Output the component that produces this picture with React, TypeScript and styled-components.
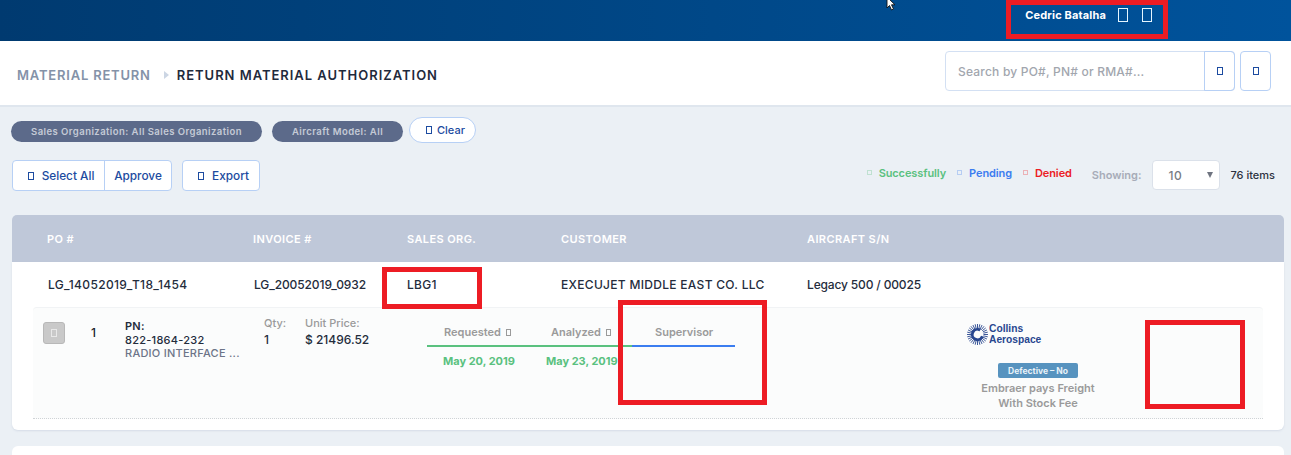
import React from 'react';
import styled, { createGlobalStyle } from 'styled-components';

const GlobalStyle = createGlobalStyle`
  html, body {
    margin: 0;
    padding: 0;
    background: #ebf0f5;
    font-family: Inter, "Liberation Sans", sans-serif;
    overflow: hidden;
  }
  * {
    box-sizing: border-box;
  }
`;

const columns = [
  { label: 'PO #', width: 206 },
  { label: 'INVOICE #', width: 154 },
  { label: 'SALES ORG.', width: 154 },
  { label: 'CUSTOMER', width: 246 },
  { label: 'AIRCRAFT S/N', width: 200 },
];

const rowValues = [
  { value: 'LG_14052019_T18_1454', width: 206, spacing: 0.35 },
  { value: 'LG_20052019_0932', width: 153, spacing: -0.1 },
  { value: 'LBG1', width: 154, spacing: 0.3 },
  { value: 'EXECUJET MIDDLE EAST CO. LLC', width: 246, spacing: 0.3 },
  { value: 'Legacy 500 / 00025', width: 200, spacing: -0.15 },
];

const sunRays = Array.from({ length: 28 }, (_, i) => (i / 28) * Math.PI * 2);

const App: React.FC = () => {
  return (
    <Page>
      <GlobalStyle />
      <TopBar>
        <UserName>Cedric Batalha</UserName>
        <TopIcon />
        <TopIcon />
      </TopBar>
      <SubHeader>
        <Crumbs>
          <CrumbParent>MATERIAL RETURN</CrumbParent>
          <CrumbArrow />
          <CrumbCurrent>RETURN MATERIAL AUTHORIZATION</CrumbCurrent>
        </Crumbs>
        <SearchGroup>
          <SearchBox>
            <SearchPlaceholder>Search by PO#, PN# or RMA#...</SearchPlaceholder>
            <SearchButton>
              <BlueIcon />
            </SearchButton>
          </SearchBox>
          <SquareButton>
            <BlueIcon />
          </SquareButton>
        </SearchGroup>
      </SubHeader>
      <Filters>
        <FilterPill $width={251}>Sales Organization: All Sales Organization</FilterPill>
        <FilterPill $width={131}>Aircraft Model: All</FilterPill>
        <ClearButton>
          <BlueIcon />
          Clear
        </ClearButton>
      </Filters>
      <Actions>
        <ActionGroup>
          <ButtonGroup>
            <SelectAllButton>
              <BlueIcon />
              Select All
            </SelectAllButton>
            <ApproveButton>Approve</ApproveButton>
          </ButtonGroup>
          <ExportButton>
            <BlueIcon />
            Export
          </ExportButton>
        </ActionGroup>
        <Status>
          <Legend $color="#5ac17f">
            <LegendMark />
            Successfully
          </Legend>
          <Legend $color="#3b7df0">
            <LegendMark />
            Pending
          </Legend>
          <Legend $color="#ec2024">
            <LegendMark />
            Denied
          </Legend>
          <ShowingLabel>Showing:</ShowingLabel>
          <PageSize>
            10
            <Caret />
          </PageSize>
          <ItemCount>76 items</ItemCount>
        </Status>
      </Actions>
      <Table>
        <TableHead>
          {columns.map(({ label, width }) => (
            <HeadCell key={label} $width={width}>
              {label}
            </HeadCell>
          ))}
        </TableHead>
        <Card>
          <MainRow>
            {rowValues.map(({ value, width, spacing }) => (
              <MainCell key={value} $width={width} $spacing={spacing}>
                {value}
              </MainCell>
            ))}
          </MainRow>
          <ItemRow>
            <ItemCheck>
              <CheckGlyph />
            </ItemCheck>
            <ItemIndex>1</ItemIndex>
            <PartInfo>
              <PartLabel>PN:</PartLabel>
              <PartNumber>822-1864-232</PartNumber>
              <PartName>RADIO INTERFACE ...</PartName>
            </PartInfo>
            <Metric $width={41}>
              <MetricLabel>Qty:</MetricLabel>
              <MetricValue>1</MetricValue>
            </Metric>
            <Metric $width={122}>
              <MetricLabel>Unit Price:</MetricLabel>
              <MetricValue>$ 21496.52</MetricValue>
            </Metric>
            <Steps>
              <Step $color="#5ac17f" $width={103} $pad={17}>
                <StepTitle>
                  Requested <StepIcon />
                </StepTitle>
                <StepDate>May 20, 2019</StepDate>
              </Step>
              <Step $color="#5ac17f" $width={102} $pad={21}>
                <StepTitle>
                  Analyzed <StepIcon />
                </StepTitle>
                <StepDate>May 23, 2019</StepDate>
              </Step>
              <Step $color="#3b7df0" $width={103} $pad={23}>
                <StepTitle>Supervisor</StepTitle>
              </Step>
            </Steps>
            <Vendor>
              <CollinsLogo>
                <svg width="21" height="21" viewBox="0 0 21 21">
                  <g stroke="#27468f" strokeWidth="0.9">
                    {sunRays.map((a) => (
                      <line
                        key={a}
                        x1={10.5 + Math.cos(a) * 6}
                        y1={10.5 + Math.sin(a) * 6}
                        x2={10.5 + Math.cos(a) * 10.5}
                        y2={10.5 + Math.sin(a) * 10.5}
                      />
                    ))}
                  </g>
                  <circle
                    cx="10.5"
                    cy="10.5"
                    r="5.2"
                    fill="none"
                    stroke="#27468f"
                    strokeWidth="2.8"
                    strokeDasharray="25 7.7"
                    transform="rotate(20 10.5 10.5)"
                  />
                </svg>
                <CollinsText>
                  Collins
                  <br />
                  Aerospace
                </CollinsText>
              </CollinsLogo>
              <DefectiveBadge>Defective – No</DefectiveBadge>
              <VendorNote>
                Embraer pays Freight
                <br />
                With Stock Fee
              </VendorNote>
            </Vendor>
          </ItemRow>
        </Card>
        <NextCard />
      </Table>
      <Cursor width="12" height="11" viewBox="0 0 12 11">
        <path d="M1 -3 L1 8 L3.5 5.5 L5.5 10 L7.5 9 L5.5 4.8 L9 4.8 Z" fill="#fff" stroke="#111" strokeWidth="0.9" />
      </Cursor>
      <RedBox $left={1006} $top={0} $width={162} $height={39} />
      <RedBox $left={382} $top={267} $width={100} $height={42} />
      <RedBox $left={618} $top={300} $width={149} $height={105} />
      <RedBox $left={1145} $top={320} $width={100} $height={89} />
    </Page>
  );
};

const Page = styled.div`
  position: relative;
  width: 1291px;
  height: 455px;
  overflow: hidden;
  background: #ebf0f5;
`;

const TopBar = styled.header`
  display: flex;
  align-items: center;
  justify-content: flex-end;
  height: 41px;
  padding: 0 139px 11px 0;
  background: linear-gradient(90deg, #003a70 0%, #00437f 35%, #00539c 100%);
`;

const UserName = styled.span`
  margin-right: 12px;
  color: #fff;
  font-size: 11px;
  font-weight: 700;
  letter-spacing: 0.15px;
`;

const Glyph = styled.span`
  display: inline-block;
  flex: none;
  border: 1px solid currentColor;
`;

const TopIcon = styled(Glyph)`
  width: 10px;
  height: 14px;
  color: #e6f6ff;
  & + & {
    margin-left: 14px;
  }
`;

const SubHeader = styled.div`
  display: flex;
  align-items: center;
  justify-content: space-between;
  height: 66px;
  padding: 0 20px 0 17px;
  background: #fff;
  border-bottom: 2px solid #dfe6ee;
`;

const Crumbs = styled.div`
  display: flex;
  align-items: center;
  margin-top: 4px;
  font-size: 13px;
  font-weight: 600;
  letter-spacing: 0.8px;
`;

const CrumbParent = styled.span`
  color: #8492a8;
`;

const CrumbArrow = styled.span`
  width: 0;
  height: 0;
  margin: 0 8px 0 13px;
  border-left: 5px solid #ccd6e4;
  border-top: 4px solid transparent;
  border-bottom: 4px solid transparent;
`;

const CrumbCurrent = styled.span`
  color: #1f2a3c;
  letter-spacing: 0.97px;
`;

const SearchGroup = styled.div`
  display: flex;
  gap: 5px;
  margin-bottom: 4px;
`;

const SearchBox = styled.div`
  display: flex;
  align-items: center;
  justify-content: space-between;
  width: 290px;
  height: 40px;
  padding-left: 12px;
  background: #fff;
  border: 1px solid #d3e0f3;
  border-radius: 4px;
`;

const SearchPlaceholder = styled.span`
  color: #a2a6ae;
  font-size: 12px;
  font-weight: 500;
  letter-spacing: 0.2px;
`;

const SearchButton = styled.div`
  display: flex;
  align-items: center;
  justify-content: center;
  width: 31px;
  height: 40px;
  margin: 0 -1px 0 0;
  border: 1px solid #b7d0f5;
  border-radius: 0 4px 4px 0;
`;

const SquareButton = styled(SearchButton)`
  margin-right: 0;
  border-radius: 4px;
`;

const BlueIcon = styled(Glyph)`
  width: 6px;
  height: 8px;
  color: #1c4ba0;
`;

const Filters = styled.div`
  display: flex;
  align-items: center;
  height: 23px;
  margin: 11px 0 0 11px;
`;

const FilterPill = styled.div<{ $width: number }>`
  display: flex;
  align-items: center;
  justify-content: center;
  width: ${({ $width }) => $width}px;
  height: 21px;
  margin: 3px 10px 0 0;
  color: #c5cad6;
  font-size: 9.5px;
  font-weight: 600;
  letter-spacing: 0.45px;
  background: #5c6a8a;
  border-radius: 11px;
  &:nth-child(2) {
    margin-right: 6px;
  }
`;

const ClearButton = styled.div`
  display: flex;
  align-items: center;
  justify-content: center;
  gap: 5px;
  width: 67px;
  height: 26px;
  padding-left: 6px;
  color: #1c4ba0;
  font-size: 11px;
  font-weight: 500;
  background: #fff;
  border: 1px solid #b7d0f5;
  border-radius: 13px;
`;

const Actions = styled.div`
  display: flex;
  align-items: flex-start;
  justify-content: space-between;
  height: 31px;
  margin: 19px 16px 0 12px;
`;

const ActionGroup = styled.div`
  display: flex;
  gap: 10px;
`;

const ButtonGroup = styled.div`
  display: flex;
  height: 31px;
  color: #1c4ba0;
  font-size: 11.8px;
  font-weight: 500;
  background: #fff;
  border: 1px solid #b7d0f5;
  border-radius: 4px;
`;

const SelectAllButton = styled.div`
  display: flex;
  align-items: center;
  justify-content: center;
  gap: 8px;
  width: 91px;
  padding-left: 5px;
`;

const ApproveButton = styled.div`
  display: flex;
  align-items: center;
  justify-content: center;
  width: 67px;
  border-left: 1px solid #b7d0f5;
`;

const ExportButton = styled(ButtonGroup)`
  align-items: center;
  justify-content: center;
  gap: 8px;
  width: 78px;
  padding-left: 5px;
`;

const Status = styled.div`
  display: flex;
  align-items: center;
  height: 30px;
`;

const Legend = styled.span<{ $color: string }>`
  display: flex;
  align-items: center;
  margin: -5px 11px 0 0;
  color: ${({ $color }) => $color};
  font-size: 11px;
  font-weight: 600;
  letter-spacing: -0.1px;
`;

const LegendMark = styled.span`
  width: 5px;
  height: 5px;
  margin-right: 7px;
  border: 1px solid currentColor;
  opacity: 0.3;
`;

const ShowingLabel = styled.span`
  margin: 0 11px 0 9px;
  color: #a7acb8;
  font-size: 11px;
  font-weight: 600;
`;

const PageSize = styled.div`
  display: flex;
  align-items: center;
  justify-content: space-between;
  width: 68px;
  height: 30px;
  padding: 0 6px 0 15px;
  color: #777c84;
  font-size: 12px;
  font-weight: 500;
  letter-spacing: 0.5px;
  background: #fff;
  border: 1px solid #dbe1ea;
  border-radius: 4px;
`;

const Caret = styled.span`
  width: 0;
  height: 0;
  border-top: 6px solid #6f7480;
  border-left: 3px solid transparent;
  border-right: 3px solid transparent;
`;

const ItemCount = styled.span`
  margin-left: 10px;
  color: #2b3240;
  font-size: 11px;
  font-weight: 500;
`;

const Table = styled.section`
  margin: 24px 7px 0 12px;
`;

const TableHead = styled.div`
  display: flex;
  align-items: center;
  height: 47px;
  padding-left: 35px;
  background: #bfc8d9;
  border-radius: 5px 5px 0 0;
`;

const HeadCell = styled.div<{ $width: number }>`
  width: ${({ $width }) => $width}px;
  color: #fff;
  font-size: 11px;
  font-weight: 600;
  letter-spacing: 0.4px;
`;

const Card = styled.div`
  height: 168px;
  padding: 0 21px;
  background: #fff;
  border-radius: 0 0 6px 6px;
  box-shadow: 0 1px 2px rgba(150, 165, 190, 0.25);
`;

const MainRow = styled.div`
  display: flex;
  align-items: center;
  height: 45px;
  padding-left: 15px;
`;

const MainCell = styled.div<{ $width: number; $spacing: number }>`
  width: ${({ $width }) => $width}px;
  color: #242c3c;
  font-size: 12px;
  font-weight: 500;
  letter-spacing: ${({ $spacing }) => $spacing}px;
  white-space: nowrap;
`;

const ItemRow = styled.div`
  display: flex;
  align-items: flex-start;
  height: 112px;
  padding: 8px 0 0 10px;
  background: #fbfcfc;
  border-top: 1px solid #f1f3f5;
  border-bottom: 1px dotted #cfd3d6;
  border-radius: 4px 4px 0 0;
`;

const ItemCheck = styled.div`
  display: flex;
  align-items: center;
  justify-content: center;
  width: 22px;
  height: 22px;
  margin-top: 6px;
  background: #c9c9c9;
  border: 1px solid #b8b8b8;
  border-radius: 3px;
`;

const CheckGlyph = styled(Glyph)`
  width: 6px;
  height: 8px;
  color: #e8e8e8;
`;

const ItemIndex = styled.div`
  width: 60px;
  margin-top: 9px;
  padding-left: 26px;
  color: #1a1f2b;
  font-size: 12px;
  font-weight: 500;
`;

const PartInfo = styled.div`
  width: 139px;
  margin-top: 4px;
  font-size: 11px;
  line-height: 13.5px;
  letter-spacing: 0.25px;
`;

const PartLabel = styled.div`
  color: #242c3c;
  font-weight: 600;
`;

const PartNumber = styled.div`
  color: #242c3c;
  font-weight: 500;
`;

const PartName = styled.div`
  color: #6c7488;
  font-weight: 500;
  white-space: nowrap;
`;

const Metric = styled.div<{ $width: number }>`
  width: ${({ $width }) => $width}px;
`;

const MetricLabel = styled.div`
  color: #9a9a9a;
  font-size: 11px;
  font-weight: 500;
  line-height: 14px;
`;

const MetricValue = styled.div`
  margin-top: 2px;
  color: #242c3c;
  font-size: 12px;
  font-weight: 500;
  line-height: 15px;
`;

const Steps = styled.div`
  display: flex;
  flex: none;
  margin-top: 9px;
`;

const Step = styled.div<{ $color: string; $width: number; $pad: number }>`
  width: ${({ $width }) => $width}px;
  & > :first-child {
    padding-left: ${({ $pad }) => $pad}px;
    border-bottom: 2px solid ${({ $color }) => $color};
  }
`;

const StepTitle = styled.div`
  display: flex;
  align-items: center;
  gap: 5px;
  height: 22px;
  padding-bottom: 6px;
  color: #9a9a9a;
  font-size: 11px;
  font-weight: 600;
`;

const StepIcon = styled(Glyph)`
  width: 5px;
  height: 7px;
  color: #9a9a9a;
`;

const StepDate = styled.div`
  margin-top: 7px;
  padding-left: 16px;
  color: #5ac17f;
  font-size: 11px;
  font-weight: 700;
  white-space: nowrap;
`;

const Vendor = styled.div`
  display: flex;
  flex-direction: column;
  align-items: center;
  width: 130px;
  margin-left: 238px;
  margin-top: 7px;
`;

const CollinsLogo = styled.div`
  display: flex;
  align-items: center;
  gap: 1px;
  align-self: flex-start;
  margin-left: -6px;
`;

const CollinsText = styled.div`
  color: #27468f;
  font-family: "Liberation Sans", sans-serif;
  font-size: 11px;
  font-weight: 700;
  line-height: 11px;
  white-space: nowrap;
  transform: scaleX(0.93);
  transform-origin: left center;
`;

const DefectiveBadge = styled.div`
  display: flex;
  align-items: center;
  justify-content: center;
  width: 80px;
  height: 15px;
  margin-top: 18px;
  color: #e9f2f8;
  font-size: 8.5px;
  font-weight: 700;
  background: #5793bf;
  border-radius: 2px;
`;

const VendorNote = styled.div`
  margin-top: 3px;
  color: #9a9a9a;
  font-size: 11px;
  font-weight: 600;
  line-height: 15px;
  text-align: center;
  white-space: nowrap;
`;

const NextCard = styled.div`
  height: 60px;
  margin-top: 16px;
  background: #fff;
  border-radius: 6px;
`;

const Cursor = styled.svg`
  position: absolute;
  left: 886px;
  top: 0;
  pointer-events: none;
`;

const RedBox = styled.div<{ $left: number; $top: number; $width: number; $height: number }>`
  position: absolute;
  left: ${({ $left }) => $left}px;
  top: ${({ $top }) => $top}px;
  width: ${({ $width }) => $width}px;
  height: ${({ $height }) => $height}px;
  border: 5px solid #ed1c24;
  pointer-events: none;
`;

export default App;
